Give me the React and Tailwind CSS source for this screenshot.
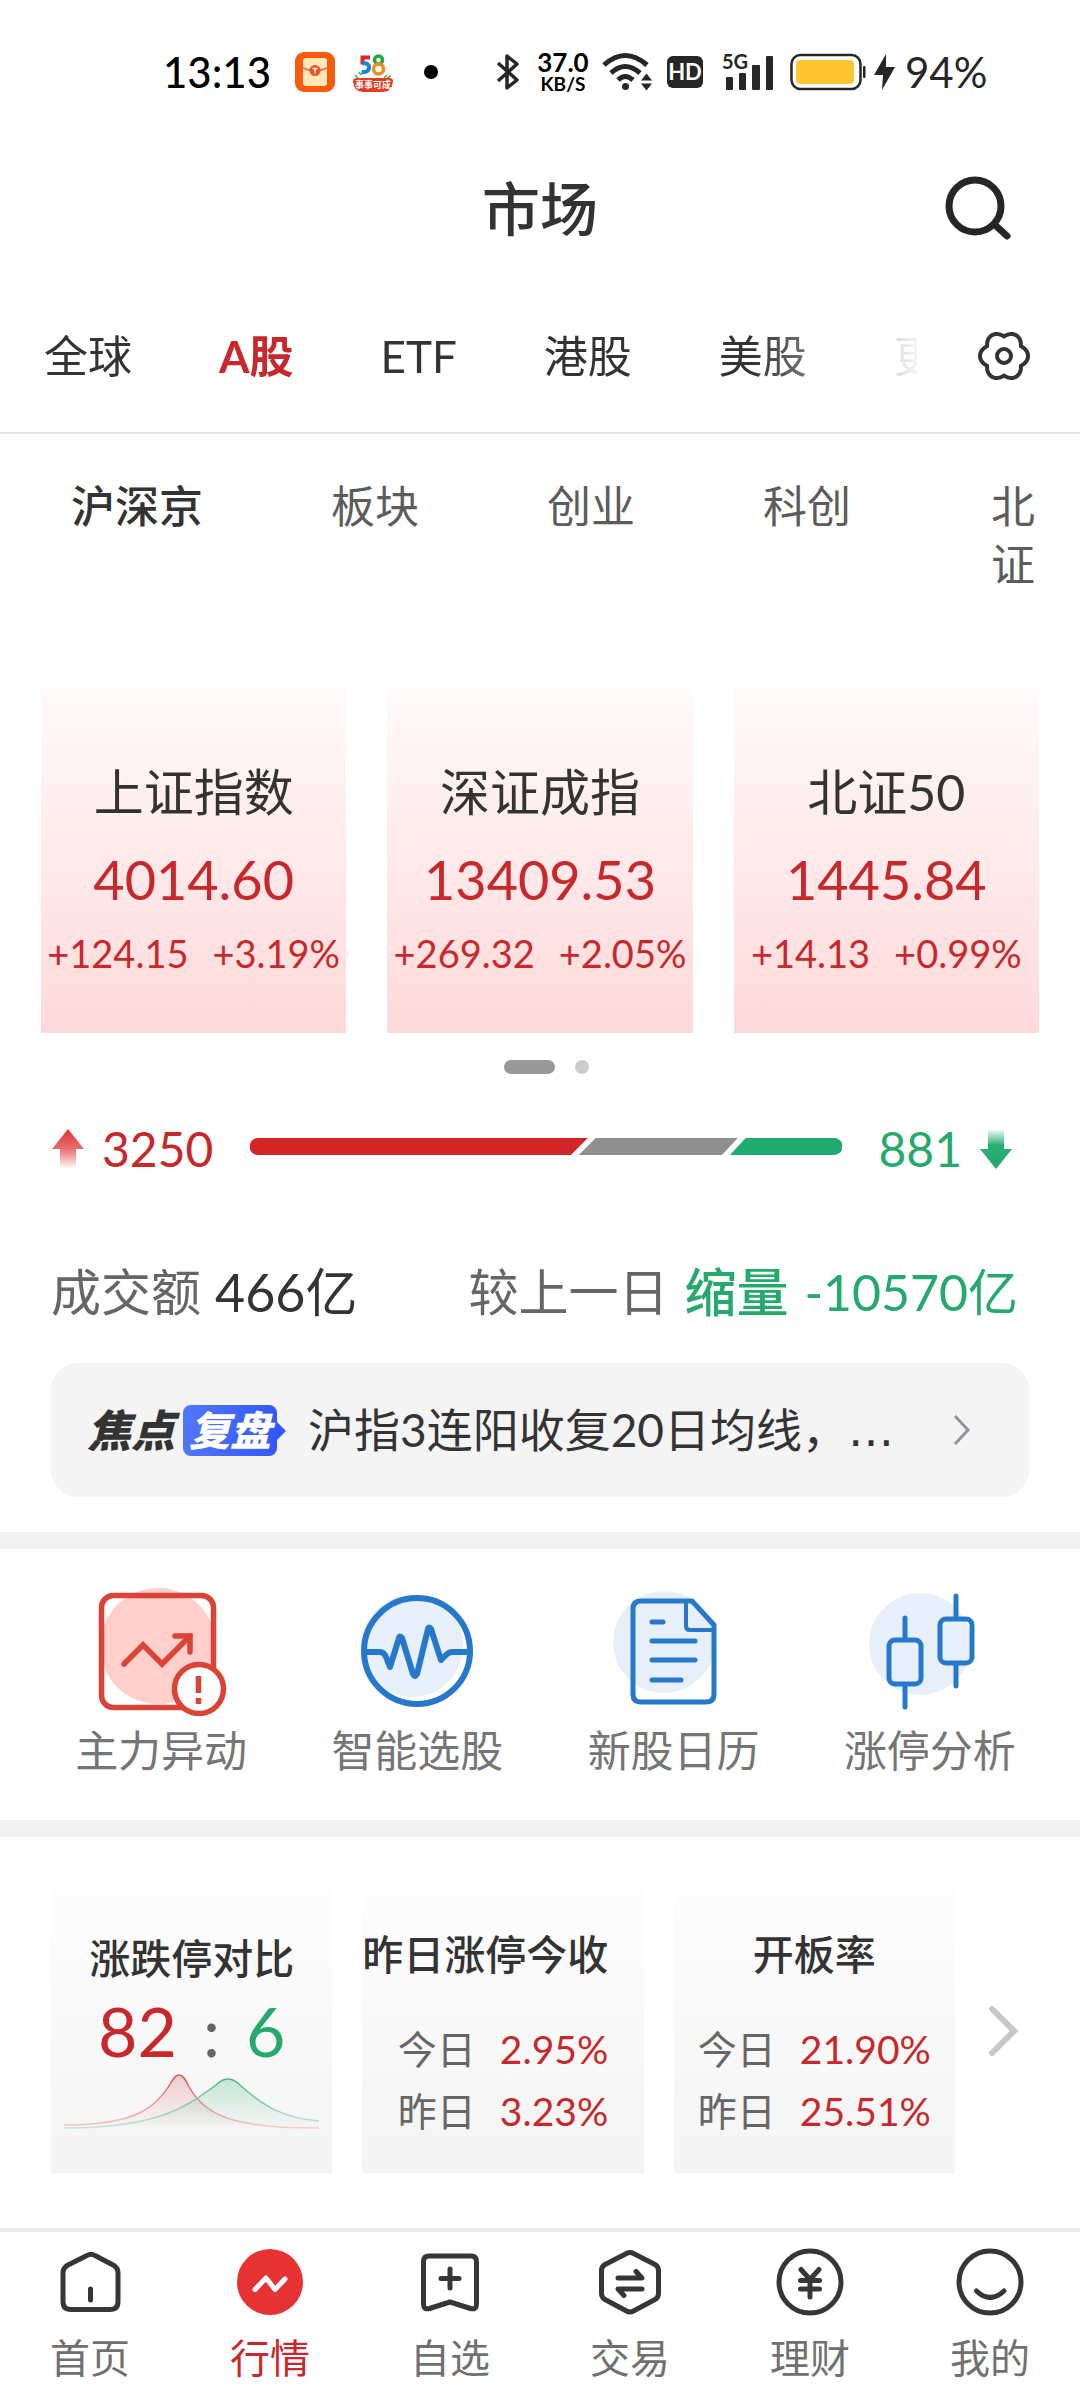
import { useState } from 'react'
import clsx from 'clsx'

const markets = ['全球', 'A股', 'ETF', '港股', '美股', '更多']
const boards = ['沪深京', '板块', '创业', '科创']

const indices = [
  { name: '上证指数', value: '4014.60', change: '+124.15', percent: '+3.19%' },
  { name: '深证成指', value: '13409.53', change: '+269.32', percent: '+2.05%' },
  { name: '北证50', value: '1445.84', change: '+14.13', percent: '+0.99%' },
]

const limitStats = [
  { title: '昨日涨停今收', today: '2.95%', yesterday: '3.23%', wide: true },
  { title: '开板率', today: '21.90%', yesterday: '25.51%' },
]

// 六瓣齿轮外轮廓
const gearPath =
  Array.from({ length: 120 }, (_, i) => {
    const a = (i / 120) * Math.PI * 2
    const r = 19.5 + 4.5 * Math.abs(Math.cos(3 * a))
    return `${i ? 'L' : 'M'}${(26 + r * Math.cos(a)).toFixed(2)} ${(26 + r * Math.sin(a)).toFixed(2)}`
  }).join('') + 'Z'

function StatusBar() {
  return (
    <div className="flex h-36 items-center pl-[163px] text-black">
      <span className="w-[108px] text-[42px] leading-none font-medium">13:13</span>
      <svg className="ml-6 size-10" viewBox="0 0 40 40" aria-hidden="true">
        <rect width="40" height="40" rx="9" fill="#fb5a0c" />
        <rect x="8" y="6" width="24" height="28" rx="3" fill="#ffe9b8" />
        <path d="M8 16q12 6 24 0" fill="none" stroke="#f0673a" strokeWidth="1.5" />
        <circle cx="20" cy="18.500" r="5.500" fill="#f4511e" />
        <path d="M17.500 16.500h5M20 16.500v5" stroke="#fff" strokeWidth="1.500" />
      </svg>
      <svg className="ml-[18px] size-10" viewBox="0 0 40 40" aria-hidden="true">
        <path d="M17 5.500h-7.500v7" fill="none" stroke="#e5202b" strokeWidth="4" />
        <path d="M9.500 11.500c9-2 9 10-1 8.500" fill="none" stroke="#1488d4" strokeWidth="4" />
        <circle cx="25.500" cy="8" r="4" fill="none" stroke="#20a83b" strokeWidth="3.500" />
        <circle cx="25.500" cy="17" r="5" fill="none" stroke="#f28b18" strokeWidth="3.500" />
        <path d="M2 23l3 3M6 20l2 3M34 23l-3 3M38 24l-4 2" stroke="#43b04a" strokeWidth="1.500" />
        <path d="M0 29q0-3 4-3h32q4 0 4 3-1 11-10 11H10Q1 40 0 29z" fill="#e8391d" />
        <text x="20" y="36" textAnchor="middle" fontSize="9" fontWeight="700" fill="#fff">事事可成</text>
      </svg>
      <span className="ml-[31px] size-3.5 rounded-full bg-black" />
      <svg className="ml-[58px] h-10 w-6" viewBox="0 0 24 40" fill="none" stroke="#262626" strokeWidth="3.500" strokeLinejoin="round" aria-hidden="true">
        <path d="M2 11l19 17-10 8V4l10 8L2 29" />
      </svg>
      <span className="ml-4 flex w-[54px] flex-col items-center font-bold">
        <span className="text-[26px] leading-6">37.0</span>
        <span className="text-[19px] leading-5">KB/S</span>
      </span>
      <svg className="ml-3 h-10 w-[52px]" viewBox="0 0 52 40" fill="none" stroke="#262626" strokeWidth="5" aria-hidden="true">
        <path d="M2 13q21-19 43 0M9 21q14-13 29 0M16 28q7-7 15 0" />
        <circle cx="23.500" cy="34.500" r="3.500" fill="#262626" stroke="none" />
        <path d="M39 28.500h11l-5.500-7zM39 31.500h11l-5.500 7z" fill="#262626" stroke="none" />
      </svg>
      <span className="ml-[13px] flex h-8 w-9 items-center justify-center rounded-md bg-[#262626] text-[22px] leading-none font-bold text-white">
        HD
      </span>
      <svg className="ml-[18px] h-10 w-[54px] overflow-visible" viewBox="0 0 54 40" fill="#262626" aria-hidden="true">
        <text x="1" y="17" fontSize="20" fontWeight="700">5G</text>
        <rect x="5" y="25" width="7" height="13" rx="1" />
        <rect x="18" y="21" width="7" height="17" rx="1" />
        <rect x="31" y="13" width="8" height="25" rx="1" />
        <rect x="45" y="4" width="7" height="34" rx="1" />
      </svg>
      <svg className="ml-3.5 h-10 w-[78px]" viewBox="0 0 78 40" aria-hidden="true">
        <rect x="2.500" y="3" width="69" height="34" rx="9" fill="#fff" stroke="#262626" strokeWidth="2.500" />
        <rect x="7" y="8" width="58" height="24" rx="4" fill="#ffc533" />
        <rect x="74" y="14" width="2.500" height="12" rx="1" fill="#262626" />
      </svg>
      <svg className="ml-1.5 h-10 w-6" viewBox="0 0 24 40" fill="#262626" aria-hidden="true">
        <path d="M13 2L1 23h9L9 38l13-23h-9z" />
      </svg>
      <span className="ml-2 text-[42px] leading-none text-[#262626]">94%</span>
    </div>
  )
}

function Header() {
  return (
    <header className="grid h-[130px] grid-cols-3 items-center">
      <h1 className="col-start-2 text-center text-[58px] leading-none font-medium">市场</h1>
      <button type="button" aria-label="搜索" className="mr-16 justify-self-end">
        <svg className="h-[72px] w-[72px]" viewBox="0 0 72 72" fill="none" stroke="#262626" strokeWidth="7" strokeLinecap="round">
          <circle cx="31" cy="33" r="26" />
          <path d="M51 52l12 11" />
        </svg>
      </button>
    </header>
  )
}

function MarketTabs() {
  const [active, setActive] = useState('A股')
  return (
    <nav className="flex h-40 items-center border-b-2 border-[#e6e6e6] pt-1.5" aria-label="市场分类">
      <div className="flex w-[917px] gap-[87px] overflow-hidden pl-11 [mask-image:linear-gradient(to_right,#000_82%,transparent_101%)]">
        {markets.map((m) => (
          <button
            key={m}
            type="button"
            onClick={() => setActive(m)}
            className={clsx(
              'shrink-0 text-[44px] leading-[60px] whitespace-nowrap',
              active === m && 'font-bold text-[#c8282b]'
            )}
          >
            {m}
          </button>
        ))}
      </div>
      <button type="button" aria-label="设置" className="ml-auto pr-[50px]">
        <svg className="size-[52px]" viewBox="0 0 52 52" fill="none" stroke="#333" strokeWidth="4" strokeLinejoin="round">
          <path d={gearPath} />
          <circle cx="26" cy="26" r="7" />
        </svg>
      </button>
    </nav>
  )
}

function BoardTabs() {
  const [active, setActive] = useState('沪深京')
  return (
    <nav className="flex items-start pt-[43px] pl-[7px] text-[44px] leading-[58px] text-[#5c5c5c]" aria-label="板块分类">
      {boards.map((b) => (
        <button
          key={b}
          type="button"
          onClick={() => setActive(b)}
          className={clsx('shrink-0 px-16', active === b && 'font-medium text-[#333]')}
        >
          {b}
        </button>
      ))}
      <button type="button" className="ml-[76px] w-11">北证</button>
    </nav>
  )
}

function IndexCard({ name, value, change, percent }) {
  return (
    <article className="flex h-[344px] flex-col items-center bg-gradient-to-b from-[#fffafa] to-[#fed9da] pt-[67px] text-[#c8282b]">
      <h2 className="text-[50px] leading-[72px] text-[#333]">{name}</h2>
      <p className="mt-3 text-[54px] leading-[80px]">{value}</p>
      <p className="flex gap-6 text-[38px] leading-[66px] whitespace-nowrap">
        <span>{change}</span>
        <span>{percent}</span>
      </p>
    </article>
  )
}

// 涨跌家数
function Breadth() {
  return (
    <div className="mt-[45px] flex h-[60px] items-center pr-[66px] pl-[50px] text-[48px] leading-[60px]">
      <svg className="h-11 w-9" viewBox="0 0 36 44" aria-hidden="true">
        <defs>
          <linearGradient id="up" x1="0" y1="0" x2="0" y2="1">
            <stop offset="0" stopColor="#dd3336" />
            <stop offset="0.500" stopColor="#ea6e70" />
            <stop offset="1" stopColor="#fff" />
          </linearGradient>
        </defs>
        <path d="M18 2l16 20h-8v20H10V22H2z" fill="url(#up)" />
      </svg>
      <span className="ml-4 text-[#c8282b]">3250</span>
      <svg className="mr-9 mb-1.5 ml-[37px] h-[17px] min-w-0 flex-1" viewBox="0 0 596 17" preserveAspectRatio="none" role="img" aria-label="上涨 3250 家，下跌 881 家">
        <path d="M8 0H340L323 17H8A8 8 0 0 1 8 0z" fill="#d22525" />
        <path d="M348 0H491L475 17H331z" fill="#8f8f8f" />
        <path d="M499 0H588A8 8 0 0 1 588 17H483z" fill="#22ab70" />
      </svg>
      <span className="text-[#26a96c]">881</span>
      <svg className="ml-4 h-11 w-9" viewBox="0 0 36 44" aria-hidden="true">
        <defs>
          <linearGradient id="down" x1="0" y1="0" x2="0" y2="1">
            <stop offset="0" stopColor="#fff" />
            <stop offset="0.400" stopColor="#2caf76" />
            <stop offset="1" stopColor="#1fa96a" />
          </linearGradient>
        </defs>
        <path d="M10 2h16v20h8L18 42 2 22h8z" fill="url(#down)" />
      </svg>
    </div>
  )
}

function Turnover() {
  return (
    <div className="mt-[78px] flex justify-between pr-[62px] pl-[51px] text-[50px] leading-[70px] text-[#666]">
      <p className="flex gap-3.5">
        成交额<span className="text-[52px] text-[#333]">466亿</span>
      </p>
      <p className="flex gap-4 text-[#26a96c]">
        <span className="text-[#666]">较上一日</span>
        <span className="text-[52px] font-medium">缩量</span>
        <span>-10570亿</span>
      </p>
    </div>
  )
}

function Focus() {
  return (
    <a href="#focus" className="mx-[51px] mt-9 mb-[35px] flex h-[134px] items-center rounded-[27px] bg-[#f4f4f4] pr-14 pl-9">
      <span className="text-[44px] leading-none font-black text-[#333] italic">焦点</span>
      <span className="relative ml-2 flex h-[51px] items-center rounded-lg bg-gradient-to-r from-[#5276fb] to-[#3358f8] px-1.5 text-[41px] leading-none font-black text-white italic">
        复盘
        <svg className="absolute top-4 -right-[9px] h-5 w-2.5" viewBox="0 0 10 20" fill="#3358f8" aria-hidden="true">
          <path d="M0 0l10 10L0 20z" />
        </svg>
      </span>
      <span className="ml-[31px] flex min-w-0 flex-1 text-[46px] leading-[64px] whitespace-nowrap text-[#333]">
        沪指3连阳收复20日均线，<span className="font-['DejaVu_Sans',sans-serif]">…</span>
      </span>
      <svg className="h-9 w-6" viewBox="0 0 24 36" fill="none" stroke="#90949c" strokeWidth="3" aria-hidden="true">
        <path d="M6 4l13 14L6 32" />
      </svg>
    </a>
  )
}

function MoverIcon() {
  return (
    <svg className="h-[130px] w-[140px]" viewBox="0 0 140 130" fill="none" stroke="#da4335" strokeWidth="5.500" aria-hidden="true">
      <circle cx="67" cy="60" r="58" fill="#ffcfcc" stroke="none" />
      <rect x="10.500" y="9.500" width="112" height="112" rx="12" />
      <path d="M33 78l19-19 19 19 28-28" strokeLinecap="round" />
      <path d="M84 50h15v16" strokeLinecap="round" />
      <circle cx="108" cy="103" r="24.500" fill="#fff" />
      <path d="M107.500 90v17M107.500 112v6" />
    </svg>
  )
}

function PulseIcon() {
  return (
    <svg className="h-[130px] w-[140px]" viewBox="0 0 140 130" fill="none" stroke="#2678cb" strokeWidth="6" strokeLinecap="round" strokeLinejoin="round" aria-hidden="true">
      <circle cx="65" cy="60" r="51" fill="#e7f0fa" stroke="none" />
      <circle cx="70" cy="65" r="53" />
      <path d="M18 66h15q4 0 6 5l4 10 9-29q1-3 3 0l11 36q2 4 4 0l11-45q1-3 3 0l10 31 5-5q3-3 6-3h17" />
    </svg>
  )
}

function CalendarIcon() {
  return (
    <svg className="h-[130px] w-[140px]" viewBox="0 0 140 130" fill="none" stroke="#2678cb" strokeWidth="5" strokeLinecap="round" strokeLinejoin="round" aria-hidden="true">
      <circle cx="60" cy="56" r="51" fill="#e7f0fa" stroke="none" />
      <path d="M37 15h51l22 24v69q0 8-8 8H37q-8 0-8-8V23q0-8 8-8z" />
      <path d="M82 15v25q0 4 4 4h24" strokeWidth="4" />
      <path d="M48 36h11M48 55h43M48 74h43M48 94h29" />
    </svg>
  )
}

function CandleIcon() {
  return (
    <svg className="h-[130px] w-[140px]" viewBox="0 0 140 130" fill="none" stroke="#2678cb" strokeWidth="5" strokeLinecap="round" aria-hidden="true">
      <circle cx="60" cy="58" r="51" fill="#e7f0fa" stroke="none" />
      <rect x="29" y="54" width="32" height="44" rx="6" />
      <rect x="80" y="33" width="32" height="44" rx="6" />
      <path d="M45 32v21M45 99v22M96 10v22M96 78v22" />
    </svg>
  )
}

const tools = [
  { label: '主力异动', Icon: MoverIcon },
  { label: '智能选股', Icon: PulseIcon },
  { label: '新股日历', Icon: CalendarIcon },
  { label: '涨停分析', Icon: CandleIcon },
]

function LimitCompare() {
  return (
    <article className="flex h-[284px] flex-col items-center bg-gradient-to-b from-[#fdfdfd] to-[#f4f4f4] pt-10">
      <h3 className="text-[41px] leading-[60px] font-medium">涨跌停对比</h3>
      <p className="mt-1 flex items-center gap-[26px] text-[68px] leading-[76px]">
        <span className="text-[#c8282b]">82</span>
        <span className="text-[#666]">:</span>
        <span className="text-[#26a96c]">6</span>
      </p>
      <svg className="mt-0.5 h-[64px] w-[255px]" viewBox="0 0 255 64" fill="none" aria-hidden="true">
        <defs>
          <linearGradient id="redHill" x1="0" y1="0" x2="0" y2="1">
            <stop offset="0" stopColor="#e04a4a" stopOpacity="0.250" />
            <stop offset="1" stopColor="#e04a4a" stopOpacity="0" />
          </linearGradient>
          <linearGradient id="greenHill" x1="0" y1="0" x2="0" y2="1">
            <stop offset="0" stopColor="#2bb177" stopOpacity="0.250" />
            <stop offset="1" stopColor="#2bb177" stopOpacity="0" />
          </linearGradient>
          <linearGradient id="redLine" x1="0" y1="0" x2="0" y2="1">
            <stop offset="0" stopColor="#d25050" />
            <stop offset="1" stopColor="#f4cccc" />
          </linearGradient>
          <linearGradient id="greenLine" x1="0" y1="0" x2="0" y2="1">
            <stop offset="0" stopColor="#48b483" />
            <stop offset="1" stopColor="#c5e4d6" />
          </linearGradient>
        </defs>
        <path d="M0 54C70 54 92 38 108 10Q115-2 122 10C138 42 160 57 255 57" fill="url(#redHill)" stroke="url(#redLine)" strokeWidth="1.500" />
        <path d="M0 57C90 57 120 38 152 14Q164 2 176 14C200 36 220 47 255 50V57z" fill="url(#greenHill)" />
        <path d="M0 57C90 57 120 38 152 14Q164 2 176 14C200 36 220 47 255 50" stroke="url(#greenLine)" strokeWidth="1.500" />
      </svg>
    </article>
  )
}

function LimitCard({ title, today, yesterday, wide }) {
  return (
    <article className="flex h-[284px] flex-col items-center bg-gradient-to-b from-[#fdfdfd] to-[#f4f4f4] pt-9">
      <h3 className={clsx('text-[41px] leading-[60px] font-medium whitespace-nowrap', wide && 'self-start')}>{title}</h3>
      <dl className="mt-[33px] grid grid-cols-[auto_auto] gap-x-6 text-right text-[39px] leading-[62px] text-[#666]">
        <dt>今日</dt>
        <dd className="text-[#c8282b]">{today}</dd>
        <dt>昨日</dt>
        <dd className="text-[#c8282b]">{yesterday}</dd>
      </dl>
    </article>
  )
}

const navItems = [
  {
    label: '首页',
    icon: (
      <>
        <path d="M31 7.500q4-2.500 8 0l19 10q4 3 4 7v29q0 8-8 8H15q-8 0-8-8v-29q0-4 4-7z" />
        <path d="M34.500 41v11" />
      </>
    ),
  },
  {
    label: '行情',
    active: true,
    icon: (
      <>
        <circle cx="34" cy="34" r="33" fill="#e63233" stroke="none" />
        <path d="M19 41.500L30 30l9 11.500L49 31" stroke="#fff" />
      </>
    ),
  },
  {
    label: '自选',
    icon: (
      <>
        <path d="M13 8h42q5.500 0 5.500 5.500V56q0 6-6 4.500L34 54l-20.500 6.500q-6 1.500-6-4.500V13.500Q7.500 8 13 8z" />
        <path d="M34 21v19M25 30.500h18" />
      </>
    ),
  },
  {
    label: '交易',
    icon: (
      <>
        <path d="M30.500 5.500q3.500-2 7 0L59 16.500q3.500 2 3.500 6v23q0 4-3.500 6L37.500 63q-3.500 2-7 0L9 51.500q-3.500-2-3.500-6v-23q0-4 3.500-6z" />
        <path d="M22 30h24l-6-6.500M46 41H22l6 6.500" />
      </>
    ),
  },
  {
    label: '理财',
    icon: (
      <>
        <circle cx="34" cy="34" r="31" />
        <path d="M25 21.500l9 10 9-10M34 31.500V49M24.500 32.500h19M24.500 41h19" />
      </>
    ),
  },
  {
    label: '我的',
    icon: (
      <>
        <circle cx="34" cy="34" r="31" />
        <path d="M20.500 43q13.500 13 27.500 0" />
      </>
    ),
  },
]

function BottomNav() {
  return (
    <nav className="mt-auto grid grid-cols-6 border-t-4 border-[#ebebeb] bg-white pt-4 pb-3.5" aria-label="主导航">
      {navItems.map(({ label, active, icon }) => (
        <button key={label} type="button" className="flex flex-col items-center">
          <svg className="size-[68px]" viewBox="0 0 68 68" fill="none" stroke="#363636" strokeWidth="5" strokeLinecap="round" strokeLinejoin="round" aria-hidden="true">
            {icon}
          </svg>
          <span className={clsx('mt-3.5 text-[40px] leading-[56px]', active ? 'text-[#c8282b]' : 'text-[#707070]')}>
            {label}
          </span>
        </button>
      ))}
    </nav>
  )
}

export default function App() {
  return (
    <div className="flex min-h-screen flex-col bg-white font-[Lato,'Noto_Sans_CJK_SC',sans-serif] text-[#333]">
      <StatusBar />
      <Header />
      <MarketTabs />
      <BoardTabs />

      <section className="mx-[41px] mt-24 grid grid-cols-3 gap-[41px]">
        {indices.map((item) => (
          <IndexCard key={item.name} {...item} />
        ))}
      </section>
      <div className="mt-[27px] flex justify-center gap-5 pl-3">
        <span className="h-3.5 w-[51px] rounded-full bg-[#999]" />
        <span className="size-3.5 rounded-full bg-[#ccc]" />
      </div>

      <Breadth />
      <Turnover />
      <Focus />

      <section className="grid grid-cols-4 border-y-[17px] border-[#f1f1f1] pt-[37px] pr-[22px] pb-[39px] pl-[33px]">
        {tools.map(({ label, Icon }) => (
          <button key={label} type="button" className="flex flex-col items-center">
            <Icon />
            <span className="mt-[5px] text-[43px] leading-[60px] text-[#757575]">{label}</span>
          </button>
        ))}
      </section>

      <section className="flex items-center pt-[52px] pl-[51px]">
        <div className="grid min-w-0 flex-1 grid-cols-3 gap-[30px]">
          <LimitCompare />
          {limitStats.map((s) => (
            <LimitCard key={s.title} {...s} />
          ))}
        </div>
        <button type="button" aria-label="更多" className="flex w-[125px] justify-center pr-8">
          <svg className="h-14 w-9" viewBox="0 0 36 56" fill="none" stroke="#c6c7cb" strokeWidth="6" strokeLinecap="round">
            <path d="M8 6l22 22L8 50" />
          </svg>
        </button>
      </section>

      <BottomNav />
    </div>
  )
}
